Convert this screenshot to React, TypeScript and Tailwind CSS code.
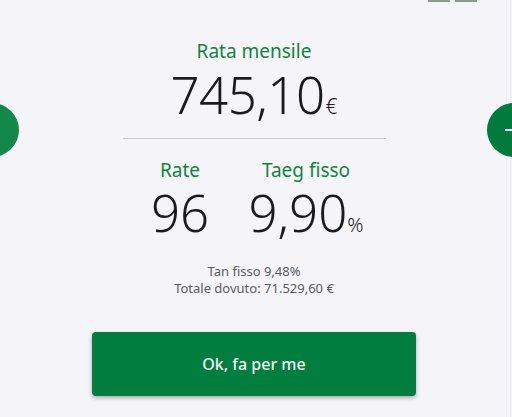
import React from "react";

export default function App() {
  return (
    <div
      className="relative w-[512px] h-[417px] overflow-hidden bg-[#f4f4f9]"
      style={{ fontFamily: '"Noto Sans", "Open Sans", sans-serif' }}
    >
      {/* top fragments */}
      <div className="absolute top-0 left-[428px] w-[22px] h-[2px] bg-[#8d9c8f]" />
      <div className="absolute top-0 left-[455px] w-[22px] h-[2px] bg-[#8d9c8f]" />
      {/* right edge */}
      <div className="absolute top-0 left-[506px] w-px h-full bg-[#ebebf2]" />
      <div className="absolute top-0 left-[510px] w-[2px] h-full bg-[#ededf3]" />

      {/* side buttons */}
      <div className="absolute left-[-35px] top-[103px] w-[54px] h-[54px] rounded-full bg-[#14884a]" />
      <div className="absolute left-[487px] top-[103px] w-[54px] h-[54px] rounded-full bg-[#007b3d] flex items-center justify-center">
        <div className="relative w-[18px] h-[18px]">
          <div className="absolute left-0 top-[8px] w-[18px] h-[2px] bg-white" />
          <div className="absolute left-[8px] top-0 w-[2px] h-[18px] bg-white" />
        </div>
      </div>

      <div className="w-[508px] flex flex-col items-center pt-[38px]">
        <div className="text-[19px] leading-[26px] text-[#11843c]">Rata mensile</div>
        <div className="flex items-baseline mt-[1px] text-[#1b1b1f]">
          <span className="text-[51px] leading-[58px] font-light tracking-[-0.5px]">745,10</span>
          <span className="ml-[1px] text-[21px] leading-[24px] font-light text-[#1b1b1f]">€</span>
        </div>
        <div className="w-[263px] h-px bg-[#c9c9cf] mt-[15px]" />

        <div className="flex justify-center gap-[16px] ml-[8px] mt-[18px]">
          <div className="w-[80px] flex flex-col items-center">
            <div className="text-[19px] leading-[26px] text-[#11843c]">Rate</div>
            <div className="text-[51px] leading-[58px] font-light text-[#1b1b1f]">96</div>
          </div>
          <div className="w-[140px] flex flex-col items-center">
            <div className="text-[19px] leading-[26px] text-[#11843c]">Taeg fisso</div>
            <div className="flex items-baseline">
              <span className="text-[51px] leading-[58px] font-light text-[#1b1b1f]">9,90</span>
              <span className="text-[20px] leading-[24px] font-light text-[#1b1b1f]">%</span>
            </div>
          </div>
        </div>

        <div className="mt-[22px] flex flex-col items-center text-[13px] leading-[17px] text-[#5b5b62]">
          <div>Tan fisso 9,48%</div>
          <div>Totale dovuto: 71.529,60 €</div>
        </div>

        <button className="mt-[35px] w-[324px] h-[64px] rounded-[4px] bg-[#007d3f] text-[#f2f7f2] text-[16px] font-medium shadow-[0_2px_4px_rgba(0,0,0,0.3)]">
          Ok, fa per me
        </button>
      </div>
    </div>
  );
}
